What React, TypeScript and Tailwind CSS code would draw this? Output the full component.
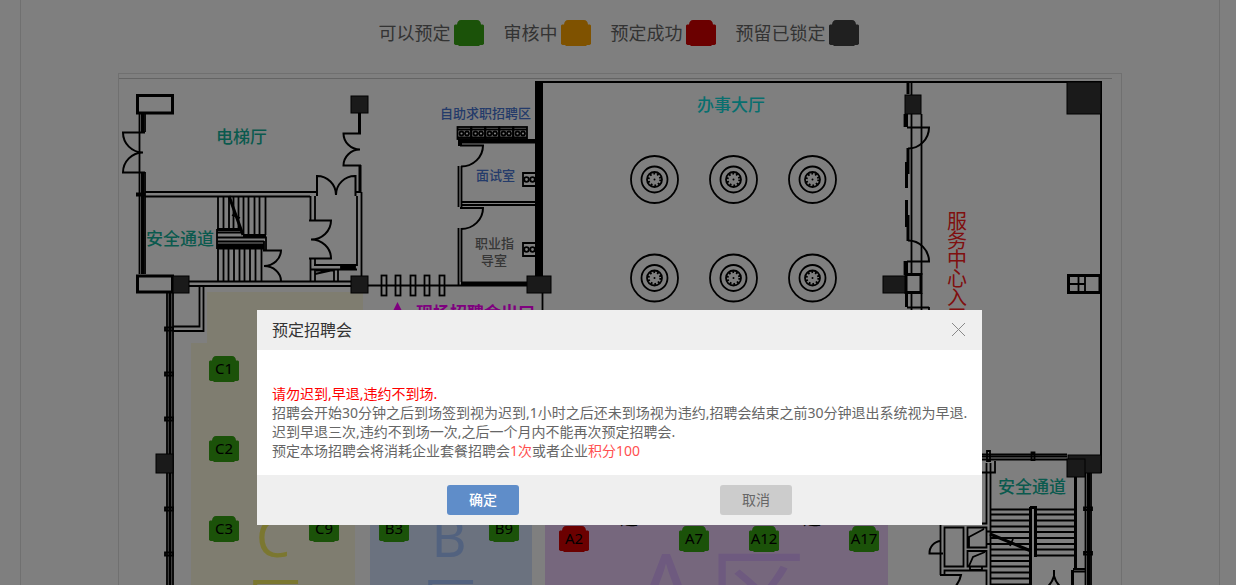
import React, { useState } from "react";

type SeatStatus = "free" | "pending" | "booked" | "locked";

type Seat = {
  name: string;
  x: number;
  y: number;
  status: SeatStatus;
};

// top left corner of the plan, all coordinates below are in plan units
const MAP_X = 119;
const MAP_Y = 74;

const statusFill: Record<SeatStatus, string> = {
  free: "fill-[#36a412]",
  pending: "fill-[#ffa500]",
  booked: "fill-[#d60000]",
  locked: "fill-[#404040]",
};

const legend: { label: string; status: SeatStatus }[] = [
  { label: "可以预定", status: "free" },
  { label: "审核中", status: "pending" },
  { label: "预定成功", status: "booked" },
  { label: "预留已锁定", status: "locked" },
];

const seats: Seat[] = [
  { name: "C1", x: 209, y: 356, status: "free" },
  { name: "C2", x: 209, y: 436, status: "free" },
  { name: "C3", x: 209, y: 516, status: "free" },
  { name: "C9", x: 309, y: 516, status: "free" },
  { name: "B3", x: 379, y: 516, status: "free" },
  { name: "B9", x: 489, y: 516, status: "free" },
  { name: "A2", x: 559, y: 526, status: "booked" },
  { name: "A7", x: 679, y: 526, status: "free" },
  { name: "A12", x: 749, y: 526, status: "free" },
  { name: "A17", x: 849, y: 526, status: "free" },
];

const thinWalls = [
  // lift hall
  "M139.5 114V274M145 114V132M145 172V274M136 193.5H145M136 195.5H145",
  "M145 192H317M145 196.5H310M361.5 192V277M357 196V265H314M355 192H361",
  "M310.5 196V220M315 196V220M310.5 258V282M315 258V265M315 269V282",
  "M311 269.5H357M316 270.5H334V281M338 270V281M315 274L333 270M341 266.5H355V268.5H341Z",
  "M189 281.5H351M189 286H351M368 285.5H528",
  // stairs on the left
  "M218 196V230M223.5 196V230M229 196V230M233.5 196V230M238.5 196V230M243.5 196V235M248.5 196V235M254.5 196V235M259.5 196V235M265.5 196V235",
  "M218 249V281M223.5 249V281M228.5 249V281M234 249V281M239.5 249V281M244.5 249V281M250 249V281M255.5 249V281M261.5 249V281",
  "M217 232.5H242M217 237.5H266V250M217 241.5H264M217 229V249M264 241V250M232 215L240 218",
  // left outer wall
  "M167 293V700M173 293V700M199.5 286V326.5H173M203.5 286V331H173",
  "M165 327.5H173V330.5H165ZM165 372.5H173V375.5H165ZM165 417.5H173V420.5H165ZM165 507.5H173V510.5H165ZM165 552.5H173V555.5H165Z",
  // interview rooms
  "M458.5 166V207M461.5 166V207M461 202H535M461 205H535M458.5 228V285M461.5 228V282M461 282.5H527M461 284H527M542.5 293V460",
  // service centre wall
  "M911.5 82V275M921.5 114V275M904.5 114V127M904.5 261V275M911.5 293V420M921.5 293V420M929 307V312",
  "M1078.5 275V293M1067 284H1085M1085 275V293",
  // lower right rooms
  "M982 454.5H1067M982 459.5H1067M987 451H990V461H987ZM1031.5 452.5H1034.5V460H1031.5ZM982 472.5H995V461M986.5 463V523.5H982M990.5 463V700",
  "M991 509.5H1030M991 514.5H1030M991 520.5H1030M991 526.5H1030M991 532H1030M991 538H1030M991 544H1030M991 549.5H1030M991 555.5H1030M991 561H1030M991 566.5H1030M991 572.5H1030M991 578.5H1030M991 584.5H1030",
  "M1037 509.5H1075M1037 514.5H1075M1037 520.5H1075M1037 526.5H1075M1037 532H1075M1037 538H1075M1037 544H1075M1037 549.5H1075M1037 555.5H1075",
  "M1085.5 473V700M1091 473V700M1084 507.5H1092V510H1084ZM1084 552H1092V554.5H1084ZM1073 569H1085M1073 571.5H1085",
  "M940.5 525V575M944.5 527.5H963.5V566.5H944.5ZM967.5 527.5H986.5V547.5H967.5ZM967.5 551H986.5V566.5H967.5ZM969 547V537L984 529M969 566L973 557L985 552",
  "M970 567V570H982V567M944.5 575V570.5H986.5V700M986.5 531.5H991M986.5 544H991",
  "M1010 546L1013 539",
];

const thickWalls = [
  "M137.5 95.5H172.5V113H137.5ZM137.5 276H172.5V292H137.5Z",
  "M142.5 114V132M142.5 173V274M359.5 113V134M360 165V192",
  "M170 293V454M170 473V700M1088.5 473V700M1075.5 477V570",
  "M217 229.5H240M217 248H264M217 245H264M243 235.5H266M229 196L243 235",
  "M906 274.5H921V292.5H906ZM1068.5 275.5H1100V292.5H1068.5Z",
  "M990 534L1031 551M1030.5 507V700M1035.5 507V557M1030 507.5H1037M1072.5 570V700",
  "M906.5 114V127M906.5 261V275M906.5 293V307M908 148V174M906.5 162V188M906.5 200V227M908 215V241",
  "M908 82V94",
];

const doors = [
  "M145 132.5H123A20 20 0 0 0 143 152.5M143 152.5A20 20 0 0 0 123 172.5H145",
  "M361 133.5H343.5A16.5 16 0 0 0 360 149.5M360 149.5A16.5 16 0 0 0 343.5 165.5H361",
  "M317 196V176A19 19 0 0 1 336 195M336 195A19 19 0 0 1 355.5 176V196",
  "M309 220.5H331A20 19 0 0 1 311 239.5M311 239.5A20 19 0 0 1 331 258.5H309",
  "M263 250.5H281A17 16 0 0 1 264 266M264 266A17 15 0 0 1 281 281",
  "M460 145.5H483A22 21 0 0 1 461 166.5",
  "M460 208H483A22 21 0 0 1 461 229",
  "M907 127.5H929A21 21 0 0 1 908 148.5",
  "M908 240.5A21 21 0 0 1 929 261.5H907",
  "M907 307.5H929",
  "M943 553.5H929.5A12 12 0 0 1 941 541",
  "M940 575H961A26 26 0 0 1 955 587",
  "M1054 570V576A22 22 0 0 1 1046 588M1054 576A22 22 0 0 0 1062 588",
];

const pillars = [
  [351, 96, 17, 17],
  [173, 276, 16, 17],
  [351, 276, 17, 17],
  [156, 454, 17, 19],
  [527, 276, 24, 17],
  [905, 95, 16, 19],
  [883, 276, 22, 17],
  [1067, 82, 34, 32],
  [1068, 455, 33, 18],
  [1067, 459, 18, 18],
];

function SeatIcon({ status }: { status: SeatStatus }) {
  return (
    <svg width="30" height="26" viewBox="0 0 30 26" className={statusFill[status]}>
      <path d="M7 0H23Q26.5 0 27 4.5H29L30 5.5V24L28.5 25H26L25 26H5L4 25H1.5L0 24V5.5L1 4.5H3Q3.5 0 7 0Z" />
    </svg>
  );
}

function RoundTable({ cx, cy }: { cx: number; cy: number }) {
  return (
    <g fill="none" stroke="#000" strokeWidth="1.8">
      <circle cx={cx} cy={cy} r="23.5" />
      <circle cx={cx} cy={cy} r="13" />
      <circle cx={cx} cy={cy} r="7.5" />
      <circle cx={cx} cy={cy} r="6" strokeWidth="2.2" strokeDasharray="1.8 1.97" />
      <circle cx={cx} cy={cy} r="1" fill="#000" stroke="none" />
    </g>
  );
}

function Desk({ y }: { y: number }) {
  return (
    <g fill="none" stroke="#000" strokeWidth="1.8">
      <path d={`M535 ${y}H523V${y + 13}H535`} />
      <circle cx="526.5" cy={y + 6.5} r="2.3" />
      <circle cx="532.5" cy={y + 6.5} r="2.3" />
    </g>
  );
}

function FloorPlan() {
  return (
    <svg
      width="1002"
      height="620"
      viewBox={`${MAP_X} ${MAP_Y} 1002 620`}
      className="block"
      aria-label="展位平面图"
    >
      <path d="M119 78.5H1112" stroke="#c8c8c8" />

      {/* zones */}
      <path d="M207 292H363V500H355V700H191V343H207Z" fill="#fffae0" />
      <rect x="370" y="400" width="162" height="300" fill="#d6e4ff" />
      <rect x="545" y="400" width="343" height="300" fill="#edcffb" />
      <g fontSize="54" textAnchor="middle">
        <text x="273" y="557" fill="#f6ee60">C</text>
        <text x="275" y="623" fill="#f6ee60">区</text>
        <text x="449" y="557" fill="#a4c4ff">B</text>
        <text x="450" y="623" fill="#a4c4ff">区</text>
      </g>
      <g fontSize="98" textAnchor="middle" fill="#dcb4ff">
        <text x="666" y="625">A</text>
        <text x="758" y="631">区</text>
      </g>
      <g fontSize="18">
        <text x="620" y="525">道</text>
        <text x="803" y="525">道</text>
      </g>

      {/* walls */}
      <g fill="none" stroke="#000">
        {thinWalls.map((d) => (
          <path key={d} d={d} strokeWidth="1.8" />
        ))}
        {thickWalls.map((d) => (
          <path key={d} d={d} strokeWidth="3" />
        ))}
        {doors.map((d) => (
          <path key={d} d={d} strokeWidth="2" />
        ))}
        <path d="M535 82H1101V473" strokeWidth="2" />
        <path d="M982 456.5H1067" strokeWidth="2" />
      </g>
      <path d="M535 81H543V277H535ZM458 139H535V143.5H462V146H458Z" />
      {pillars.map(([x, y, w, h]) => (
        <rect key={`${x}-${y}`} x={x} y={y} width={w} height={h} fill="#343434" stroke="#000" />
      ))}

      {/* self service terminals */}
      {[457.5, 471.5, 485.5, 499.5, 513.5].map((x) => (
        <g key={x} fill="none" stroke="#000" strokeWidth="1.8">
          <rect x={x} y="127" width="13.5" height="12" />
          <path d={`M${x} 129.5h13.5M${x} 137.5h13.5`} />
          <circle cx={x + 4} cy="133.5" r="2" />
          <circle cx={x + 9.5} cy="133.5" r="2" />
        </g>
      ))}
      <Desk y={173} />
      <Desk y={243} />

      {/* turnstiles */}
      {[381.5, 395.5, 410.5, 424.5, 439.5].map((x) => (
        <rect key={x} x={x} y="275.5" width="5" height="20" fill="none" stroke="#000" strokeWidth="1.8" />
      ))}

      {[179.5, 278].map((cy) =>
        [654.5, 733.5, 812.5].map((cx) => <RoundTable key={`${cx}-${cy}`} cx={cx} cy={cy} />)
      )}

      {/* room names */}
      <g fontSize="17" fontWeight="500" fill="#14b49c">
        <text x="216" y="143">电梯厅</text>
        <text x="146" y="245">安全通道</text>
        <text x="998" y="493">安全通道</text>
      </g>
      <text x="697" y="111" fontSize="17" fontWeight="500" fill="#10dede">
        办事大厅
      </text>
      <g fontSize="13" fontWeight="500" fill="#4876d4">
        <text x="440" y="118">自助求职招聘区</text>
        <text x="476" y="180">面试室</text>
      </g>
      <g fontSize="13" fontWeight="500" fill="#6c6c6c">
        <text x="475" y="248">职业指</text>
        <text x="481" y="265">导室</text>
      </g>
      <path d="M397.5 302L404 315H391Z" fill="#f0f" />
      <text x="416" y="319" fontSize="17" fontWeight="700" fill="#f0f">
        现场招聘会出口
      </text>
      <g fontSize="20" fill="#ff2020">
        {"服务中心入口".split("").map((char, idx) => (
          <text key={char} x="947" y={229 + idx * 19}>
            {char}
          </text>
        ))}
      </g>
    </svg>
  );
}

function BookingDialog({ onClose }: { onClose: () => void }) {
  return (
    <div className="fixed inset-0 flex items-start justify-center bg-black/50 pl-[3px] pt-[310px]">
      <div
        role="dialog"
        aria-modal="true"
        aria-labelledby="booking-title"
        className="w-[725px] max-w-full bg-white text-sm text-[#666]"
      >
        <div className="flex h-10 items-center justify-between bg-[#efefef] px-[15px]">
          <h2 id="booking-title" className="text-base text-[#333]">
            预定招聘会
          </h2>
          <button type="button" aria-label="关闭" onClick={onClose}>
            <svg width="16" height="16" viewBox="0 0 16 16" stroke="#888" className="block">
              <path d="M1 1L14 14M14 1L1 14" />
            </svg>
          </button>
        </div>
        <div className="px-[15px] pb-[15px] pt-[34px] leading-[19px]">
          <p className="text-[#f00]">请勿迟到,早退,违约不到场.</p>
          <p className="whitespace-nowrap">
            招聘会开始30分钟之后到场签到视为迟到,1小时之后还未到场视为违约,招聘会结束之前30分钟退出系统视为早退.
          </p>
          <p>迟到早退三次,违约不到场一次,之后一个月内不能再次预定招聘会.</p>
          <p>
            预定本场招聘会将消耗企业套餐招聘会<span className="text-[#ff4f4f]">1次</span>
            或者企业<span className="text-[#ff4f4f]">积分100</span>
          </p>
        </div>
        <div className="flex h-[50px] items-center justify-center gap-[201px] bg-[#efefef]">
          <button
            type="button"
            onClick={onClose}
            className="h-[30px] w-[72px] rounded-[3px] bg-[#5f8dc9] font-medium text-white"
          >
            确定
          </button>
          <button
            type="button"
            onClick={onClose}
            className="h-[30px] w-[72px] rounded-[3px] bg-[#ccc] text-[#666]"
          >
            取消
          </button>
        </div>
      </div>
    </div>
  );
}

export default function App() {
  const [open, setOpen] = useState(true);

  return (
    <div className="h-screen overflow-hidden bg-white pl-1 font-['Noto_Sans','Noto_Sans_CJK_SC',sans-serif]">
      <main className="mx-auto min-h-full max-w-[1200px] border-x border-[#e0e0e0] pt-5">
        <ul className="flex items-center justify-center gap-5 pr-[3px] text-lg leading-[26px] text-[#666]">
          {legend.map((item) => (
            <li key={item.status} className="flex items-center gap-[3px]">
              {item.label}
              <SeatIcon status={item.status} />
            </li>
          ))}
        </ul>
        <div className="relative mx-auto mt-[27px] w-[1004px] border border-[#e0e0e0]">
          <FloorPlan />
          {seats.map((seat) => (
            <button
              key={seat.name}
              type="button"
              onClick={() => setOpen(true)}
              className="absolute"
              style={{ left: seat.x - MAP_X, top: seat.y - MAP_Y }}
            >
              <SeatIcon status={seat.status} />
              <span className="absolute inset-0 text-center text-[15px] leading-6 text-black">
                {seat.name}
              </span>
            </button>
          ))}
        </div>
      </main>
      {open && <BookingDialog onClose={() => setOpen(false)} />}
    </div>
  );
}
